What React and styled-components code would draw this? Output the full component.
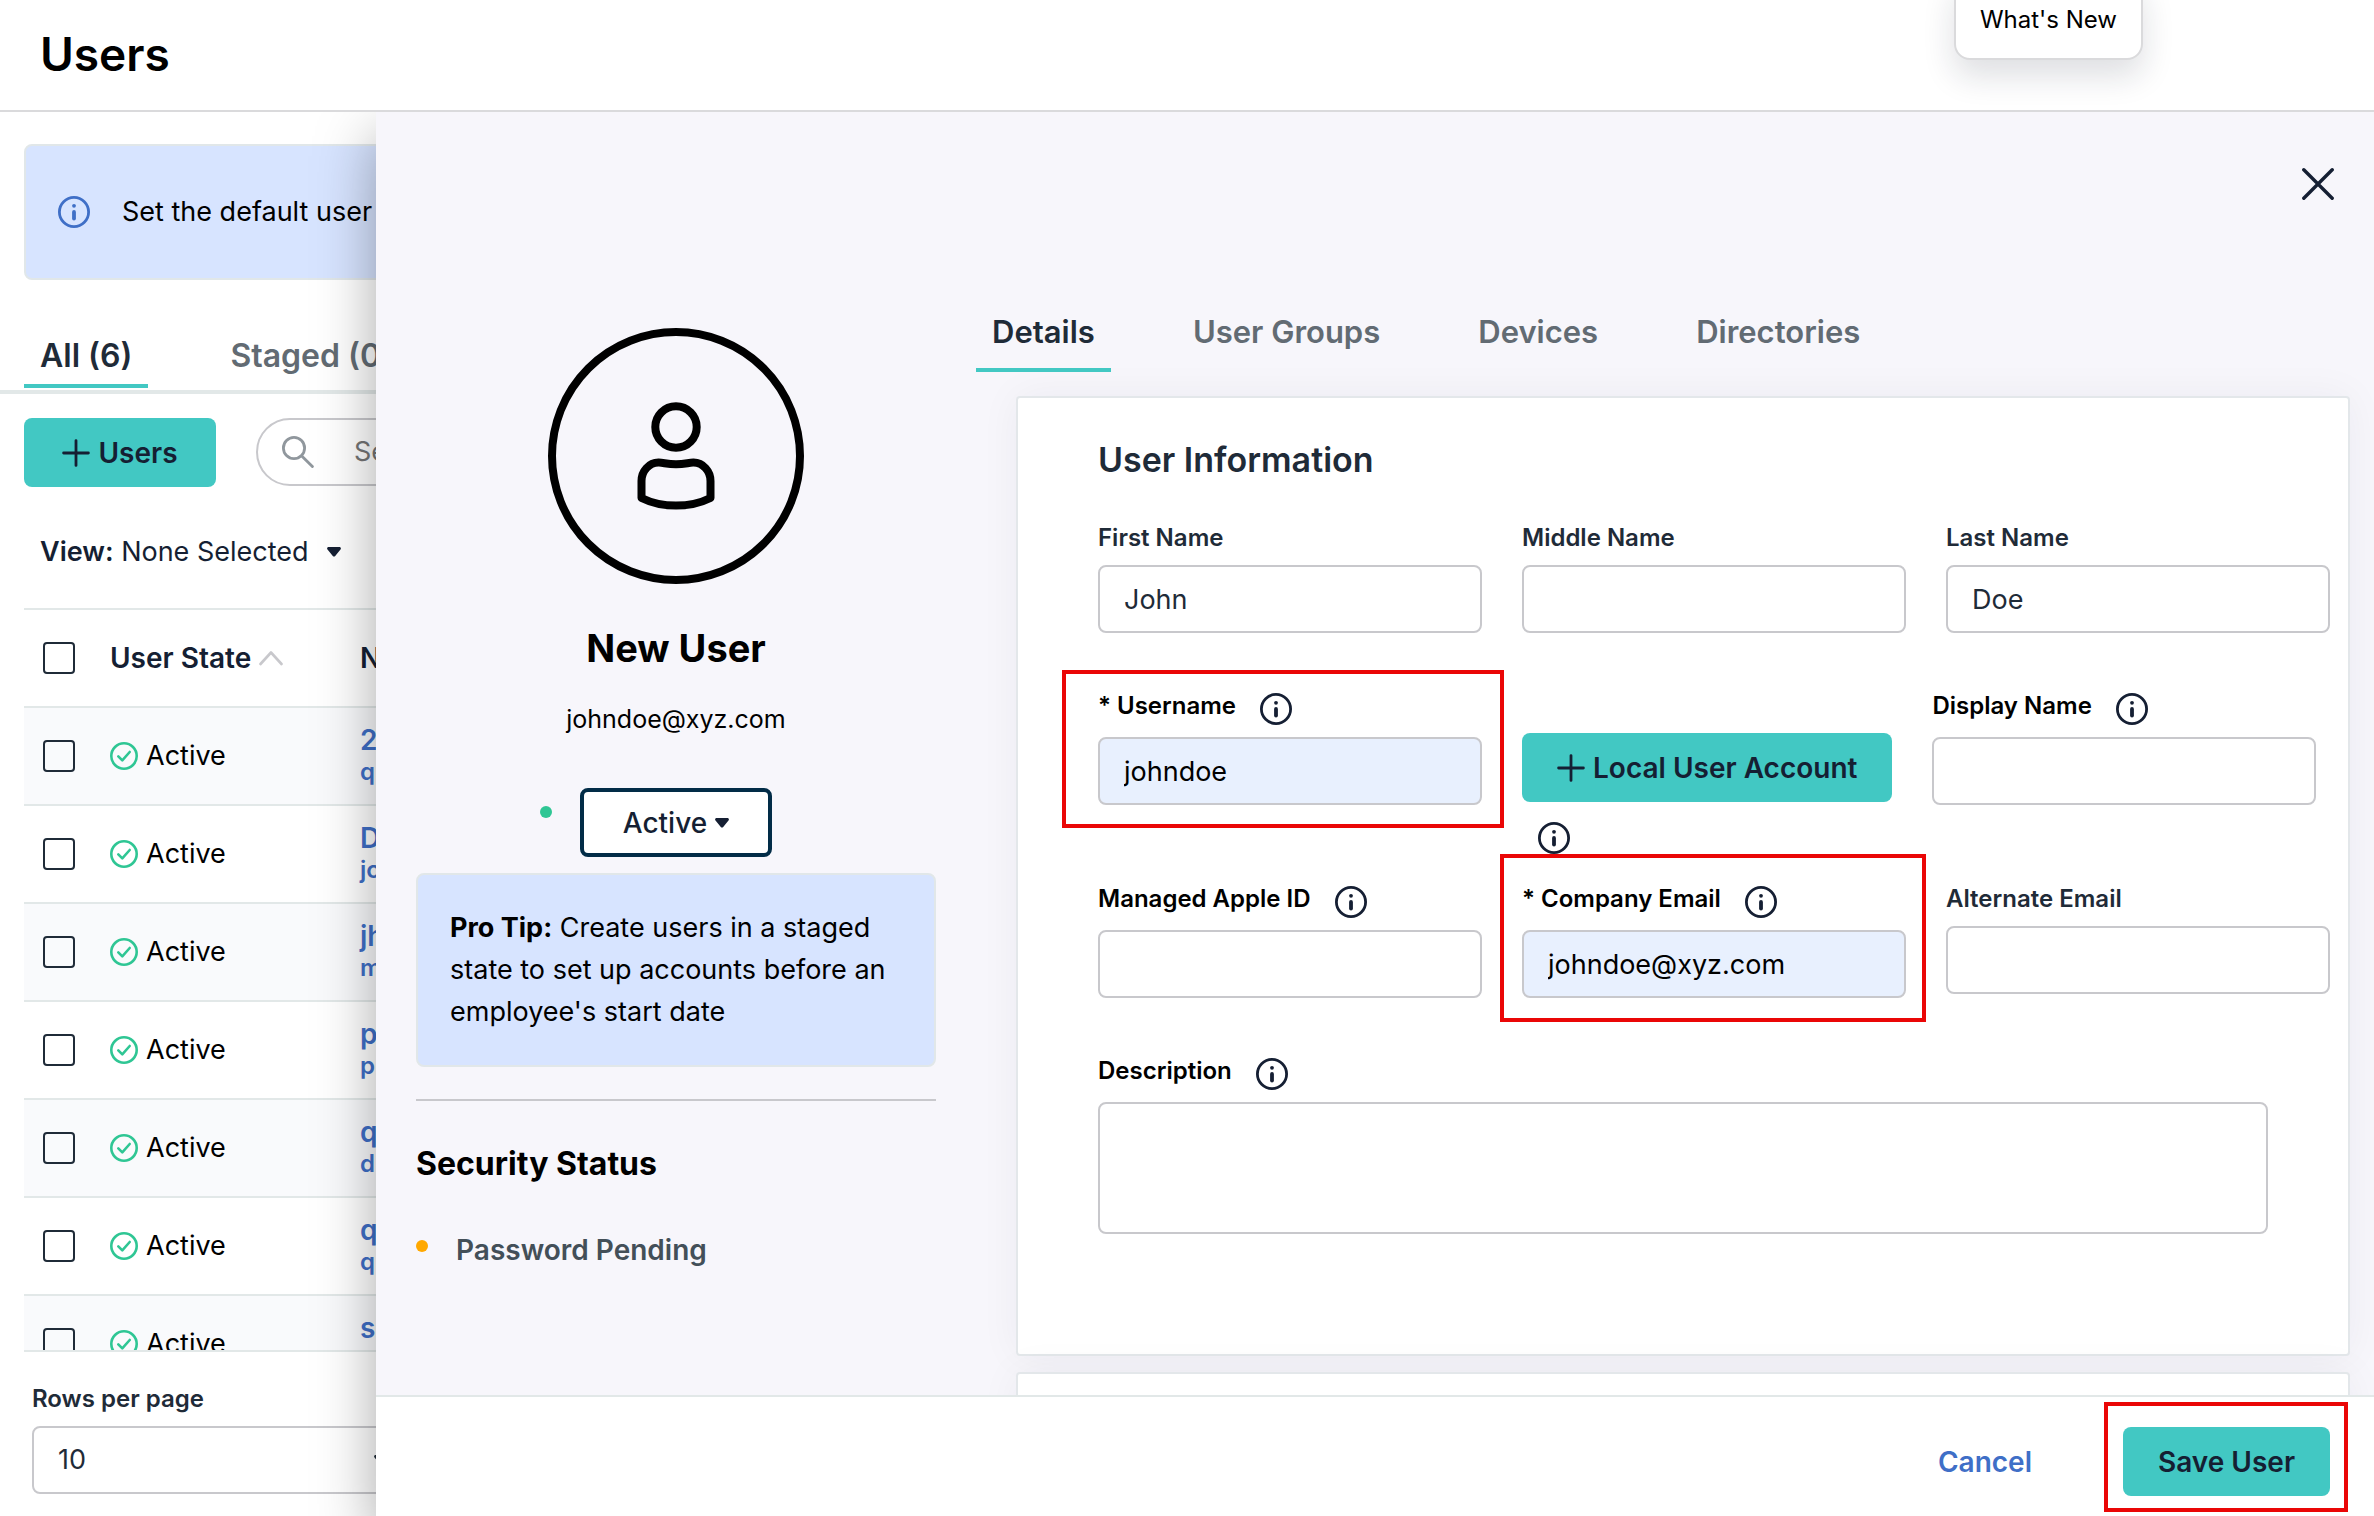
import React, { useState } from 'react';
import styled, { createGlobalStyle, css } from 'styled-components';

const GlobalStyle = createGlobalStyle`
    *, *::before, *::after {
        box-sizing: border-box;
    }
    body {
        margin: 0;
        background: #fff;
        color: #000;
        font-family: Inter, "Liberation Sans", sans-serif;
        font-size: 27px;
        line-height: 42px;
    }
    h1, h2, p {
        margin: 0;
    }
    button, input, select, textarea {
        font: inherit;
        color: inherit;
    }
    svg {
        display: block;
        flex: none;
    }
`;

/* ---------- icons ---------- */

const InfoIcon = () => (
    <svg width="32" height="32" viewBox="0 0 32 32" fill="none" stroke="currentColor">
        <circle cx="16" cy="16" r="14.6" strokeWidth="2.8" />
        <circle cx="16" cy="9.8" r="1.9" fill="currentColor" stroke="none" />
        <path d="M16 16v6.6" strokeWidth="3.8" strokeLinecap="round" />
    </svg>
);

const PlusIcon = () => (
    <svg width="28" height="28" viewBox="0 0 28 28" fill="none" stroke="currentColor" strokeWidth="2.8" strokeLinecap="round">
        <path d="M14 1.6v24.8M1.6 14h24.8" />
    </svg>
);

const SearchIcon = () => (
    <svg width="32" height="32" viewBox="0 0 32 32" fill="none" stroke="#90979d" strokeWidth="2.8" strokeLinecap="round">
        <circle cx="12" cy="12" r="10.6" />
        <path d="M20 20.2l10.4 10.4" />
    </svg>
);

const CaretIcon = () => (
    <svg width="14" height="10" viewBox="0 0 14 10" fill="currentColor">
        <path d="M1.6 0h10.8c1.3 0 2 1.5 1.1 2.5L8.2 8.9c-.6.8-1.8.8-2.4 0L.5 2.5C-.4 1.5.3 0 1.6 0z" />
    </svg>
);

const SortIcon = () => (
    <svg width="24" height="16" viewBox="0 0 24 16" fill="none" stroke="#c8c8cc" strokeWidth="2.6" strokeLinecap="round" strokeLinejoin="round">
        <path d="M1.5 14L12 2.5 22.5 14" />
    </svg>
);

const CheckCircleIcon = () => (
    <svg width="28" height="28" viewBox="0 0 28 28" fill="none" stroke="#2fc694" strokeWidth="2.6" strokeLinecap="round" strokeLinejoin="round">
        <circle cx="14" cy="14" r="12.7" />
        <path d="M8.3 14.3l4 4 7.4-8.3" />
    </svg>
);

const CloseIcon = () => (
    <svg width="32" height="32" viewBox="0 0 32 32" fill="none" stroke="currentColor" strokeWidth="3.4" strokeLinecap="round">
        <path d="M1.8 1.8l28.4 28.4M30.2 1.8L1.8 30.2" />
    </svg>
);

const AvatarIcon = () => (
    <svg width="256" height="256" viewBox="0 0 256 256" fill="none" stroke="#000" strokeWidth="8" strokeLinejoin="round">
        <circle cx="128" cy="128" r="124" />
        <circle cx="128" cy="99" r="20.7" />
        <path d="M93.5 170v-17c0-10 7.5-18.2 17-18.4 5-.1 8 1.6 17.5 1.6s12.5-1.7 17.5-1.6c9.5.2 17 8.4 17 18.4v17c-10 5-21 7.6-34.5 7.6S103.5 175 93.5 170z" />
    </svg>
);

/* ---------- shared ---------- */

const Button = styled.button`
    display: inline-flex;
    align-items: center;
    justify-content: center;
    gap: 8px;
    min-width: 192px;
    height: 69px;
    padding: 0 35px;
    border: 0;
    border-radius: 8px;
    background: #42c8c3;
    color: #151f33;
    font-size: 28px;
    font-weight: 600;
    white-space: nowrap;
    cursor: pointer;
`;

const OutlineButton = styled(Button)`
    padding: 0;
    border: 4px solid #022c47;
    background: #fff;
    font-weight: 500;
`;

const LinkButton = styled(Button)`
    min-width: 0;
    padding: 0;
    background: none;
    color: #3f6fc7;
`;

const IconButton = styled.button`
    padding: 0;
    border: 0;
    background: none;
    color: #151f33;
    cursor: pointer;
`;

const Checkbox = styled.input.attrs({ type: 'checkbox' })`
    display: block;
    appearance: none;
    width: 32px;
    height: 32px;
    margin: 0;
    border: 2px solid #1f2b38;
    border-radius: 4px;
    background: transparent;
`;

const Callout = styled.div`
    border: 2px solid #e1e7e9;
    border-radius: 8px;
    background: #d7e4ff;
`;

const control = css`
    display: block;
    width: 100%;
    height: 68px;
    padding: 0 24px;
    border: 2px solid #c8c8cc;
    border-radius: 8px;
    background: #fff;
    color: #1f2b38;
    outline: 0;
`;

const TabList = styled.div`
    display: flex;
    gap: 66px;
`;

const Tab = styled.button`
    padding: 0 16px 16px;
    border: 0;
    border-bottom: 4px solid ${({ $active }) => ($active ? '#42c8c3' : 'transparent')};
    background: none;
    color: ${({ $active }) => ($active ? '#1f2b38' : '#626b73')};
    font-size: 31px;
    font-weight: 600;
    line-height: 40px;
    white-space: nowrap;
`;

/* ---------- page ---------- */

const Page = styled.div`
    display: flex;
    flex-direction: column;
    height: 100vh;
    overflow: hidden;
`;

const Header = styled.header`
    position: relative;
    display: flex;
    align-items: center;
    flex: none;
    height: 112px;
    padding: 0 40px 2px;
    border-bottom: 2px solid #dadadc;
`;

const PageTitle = styled.h1`
    font-size: 46px;
    font-weight: 600;
    line-height: 56px;
`;

const WhatsNew = styled.button`
    position: absolute;
    top: -24px;
    right: 231px;
    height: 84px;
    padding: 4px 24px 0;
    border: 2px solid #dadadc;
    border-radius: 16px;
    background: #fff;
    box-shadow: 0 16px 32px rgba(20, 30, 50, 0.14);
    font-size: 24px;
    line-height: 32px;
`;

const Body = styled.div`
    position: relative;
    flex: 1;
    min-height: 0;
    overflow: hidden;
`;

const ListPane = styled.main`
    display: flex;
    flex-direction: column;
    height: 100%;
    padding-top: 32px;
`;

const Banner = styled(Callout)`
    display: flex;
    align-items: center;
    gap: 32px;
    height: 136px;
    margin: 0 24px 56px;
    padding: 0 32px;
    color: #3f6fc7;
    p {
        color: #000;
    }
`;

const ListTabs = styled(TabList)`
    padding: 0 24px 2px;
    border-bottom: 4px solid #e2e8e8;
    ${Tab} {
        padding-bottom: 8px;
        font-size: 32px;
    }
`;

const Toolbar = styled.div`
    display: flex;
    gap: 40px;
    padding: 24px 24px 44px;
`;

const Search = styled.label`
    display: flex;
    align-items: center;
    gap: 40px;
    height: 68px;
    padding: 0 24px;
    border: 2px solid #c8c8cc;
    border-radius: 34px;
    input {
        width: 400px;
        padding: 0;
        border: 0;
        outline: 0;
    }
    input::placeholder {
        color: #757575;
    }
`;

const ViewPicker = styled.button`
    display: flex;
    align-items: center;
    align-self: flex-start;
    gap: 18px;
    margin: 0 40px 35px;
    padding: 0;
    border: 0;
    background: none;
    color: #151f33;
    line-height: 42px;
    b {
        font-weight: 600;
    }
`;

const TableWrap = styled.div`
    flex: 1;
    min-height: 0;
    margin: 0 24px;
    overflow: hidden;
    border-top: 2px solid #e2e8e8;
`;

const Table = styled.table`
    width: 100%;
    border-spacing: 0;
    table-layout: fixed;
    text-align: left;
    th, td {
        height: 98px;
        padding: 0;
        border-bottom: 2px solid #e2e8e8;
        vertical-align: middle;
        white-space: nowrap;
    }
    th {
        color: #151f33;
        font-size: 28px;
        font-weight: 600;
    }
    th:first-child, td:first-child {
        width: 86px;
        padding-left: 19px;
    }
    th:nth-child(2) {
        width: 250px;
    }
    tbody tr:nth-child(odd) {
        background: #f9fafc;
    }
`;

const Cell = styled.div`
    display: flex;
    align-items: center;
    gap: 8px;
`;

const NameLink = styled.a`
    display: block;
    color: #3f6fc7;
    font-size: 28px;
    font-weight: 600;
    line-height: 32px;
    text-decoration: none;
    small {
        display: block;
        font-size: 24px;
    }
`;

const PagerBar = styled.footer`
    flex: none;
    margin: 0 24px;
    border-top: 2px solid #e2e8e8;
`;

const Pager = styled.div`
    display: flex;
    flex-direction: column;
    gap: 10px;
    width: 400px;
    padding: 30px 8px 22px;
    label {
        color: #1f2b38;
        font-size: 24px;
        font-weight: 600;
        line-height: 34px;
    }
`;

const SelectBox = styled.div`
    display: grid;
    align-items: center;
    color: #1f2b38;
    select, svg {
        grid-area: 1 / 1;
    }
    select {
        ${control}
        appearance: none;
    }
    svg {
        justify-self: end;
        margin-right: 28px;
        pointer-events: none;
    }
`;

/* ---------- drawer ---------- */

const Drawer = styled.aside`
    position: absolute;
    inset: 0 0 0 376px;
    display: flex;
    flex-direction: column;
    background: #f7f6fb;
    box-shadow: 0 24px 56px rgba(0, 0, 0, 0.34);
`;

const CloseButton = styled(IconButton)`
    position: absolute;
    top: 56px;
    right: 40px;
`;

const DrawerBody = styled.div`
    display: grid;
    grid-template-columns: 600px minmax(0, 1fr);
    flex: 1;
    min-height: 0;
    overflow: hidden;
`;

const Profile = styled.section`
    display: flex;
    flex-direction: column;
    padding: 216px 40px 0;
`;

const Identity = styled.div`
    display: flex;
    flex-direction: column;
    align-items: center;
`;

const ProfileName = styled.h2`
    margin: 40px 0 26px;
    font-size: 38px;
    font-weight: 700;
    line-height: 48px;
`;

const ProfileEmail = styled.p`
    font-size: 25px;
`;

const StateRow = styled.div`
    display: flex;
    gap: 28px;
    margin: 48px 0 16px;
    padding-right: 40px;
`;

const Dot = styled.span`
    flex: none;
    width: 12px;
    height: 12px;
    margin-top: ${({ $top }) => $top}px;
    border-radius: 50%;
    background: ${({ $color }) => $color};
`;

const ProTip = styled(Callout)`
    padding: 32px;
`;

const Divider = styled.hr`
    width: 100%;
    margin: 32px 0 43px;
    border: 0;
    border-top: 2px solid #c8c8cc;
`;

const SectionTitle = styled.h2`
    font-size: 32px;
    font-weight: 700;
    line-height: 40px;
`;

const StatusItem = styled.div`
    display: flex;
    gap: 28px;
    margin-top: 45px;
    color: #434f58;
    font-size: 28px;
    font-weight: 600;
`;

const DetailsColumn = styled.section`
    padding: 200px 24px 0 0;
    min-width: 0;
`;

const Card = styled.div`
    margin: ${({ $first }) => ($first ? 24 : 16)}px 0 0 40px;
    padding: 42px 18px 120px 80px;
    border: 2px solid #e3e7ea;
    border-radius: 4px;
    background: #fff;
    box-shadow: 0 0 40px rgba(30, 30, 60, 0.05);
`;

const FormTitle = styled.h2`
    margin-bottom: 40px;
    color: #1f2b38;
    font-size: 34px;
    font-weight: 600;
    line-height: 40px;
`;

const Row = styled.div`
    display: flex;
    gap: 40px;
    margin-bottom: ${({ $space }) => $space}px;
`;

const FieldBox = styled.div`
    position: relative;
    flex: none;
    align-self: flex-start;
    width: ${({ $wide }) => ($wide ? '95%' : 'calc((100% - 80px) / 3)')};
`;

const LabelRow = styled.div`
    display: flex;
    align-items: flex-start;
    gap: 24px;
    margin-bottom: ${({ $info }) => ($info ? 12 : 10)}px;
    color: ${({ $info }) => ($info ? '#000' : '#1f2b38')};
    font-size: 24px;
    font-weight: 600;
    line-height: 35px;
    ${IconButton} {
        margin-top: 5px;
    }
`;

const Input = styled.input`
    ${control}
    ${({ $filled }) => $filled && css`
        background: #e8f0fe;
        color: #000;
    `}
`;

const TextArea = styled.textarea`
    ${control}
    height: 132px;
    padding: 16px 24px;
    resize: none;
`;

const LocalAccount = styled.div`
    display: flex;
    flex-direction: column;
    align-items: flex-start;
    gap: 20px;
    padding-top: 45px;
    ${IconButton} {
        margin-left: 16px;
    }
`;

const Highlight = styled.span`
    position: absolute;
    inset: ${({ $inset }) => $inset};
    border: 4px solid #ea0606;
    pointer-events: none;
`;

const DrawerFooter = styled.footer`
    display: flex;
    justify-content: flex-end;
    flex: none;
    gap: 91px;
    padding: 30px 44px 20px;
    border-top: 2px solid #e2e8e8;
    background: #fff;
`;

const SaveSlot = styled.div`
    position: relative;
    display: flex;
`;

const users = [
    { name: '2', login: 'q' },
    { name: 'D', login: 'jo' },
    { name: 'jh', login: 'm' },
    { name: 'p', login: 'p' },
    { name: 'q', login: 'd' },
    { name: 'q', login: 'q' },
    { name: 's', login: 's' },
];

const drawerTabs = ['Details', 'User Groups', 'Devices', 'Directories'];

const InfoButton = ({ label }) => (
    <IconButton type="button" aria-label={`About ${label}`}>
        <InfoIcon />
    </IconButton>
);

const Field = ({ id, label, value = '', required, info, filled, highlight }) => (
    <FieldBox>
        <LabelRow $info={info}>
            <label htmlFor={id}>{required ? `* ${label}` : label}</label>
            {info && <InfoButton label={label} />}
        </LabelRow>
        <Input id={id} defaultValue={value} $filled={filled} />
        {highlight && <Highlight $inset={highlight} />}
    </FieldBox>
);

const UserTable = () => (
    <Table>
        <thead>
            <tr>
                <th><Checkbox aria-label="Select all users" /></th>
                <th><Cell>User State <SortIcon /></Cell></th>
                <th>Name</th>
            </tr>
        </thead>
        <tbody>
            {users.map(({ name, login }, index) => (
                <tr key={index}>
                    <td><Checkbox aria-label={`Select ${name}`} /></td>
                    <td><Cell><CheckCircleIcon /> Active</Cell></td>
                    <td>
                        <NameLink href="#user">
                            {name}
                            <small>{login}</small>
                        </NameLink>
                    </td>
                </tr>
            ))}
        </tbody>
    </Table>
);

const UserList = () => (
    <ListPane>
        <Banner>
            <InfoIcon />
            <p>Set the default user</p>
        </Banner>
        <ListTabs>
            <Tab type="button" $active>All (6)</Tab>
            <Tab type="button">Staged (0)</Tab>
        </ListTabs>
        <Toolbar>
            <Button type="button"><PlusIcon />Users</Button>
            <Search>
                <SearchIcon />
                <input type="search" placeholder="Search" aria-label="Search" />
            </Search>
        </Toolbar>
        <ViewPicker type="button">
            <span><b>View:</b> None Selected</span>
            <CaretIcon />
        </ViewPicker>
        <TableWrap>
            <UserTable />
        </TableWrap>
        <PagerBar>
            <Pager>
                <label htmlFor="rows">Rows per page</label>
                <SelectBox>
                    <select id="rows" defaultValue="10">
                        <option>10</option>
                    </select>
                    <CaretIcon />
                </SelectBox>
            </Pager>
        </PagerBar>
    </ListPane>
);

const ProfilePanel = () => (
    <Profile>
        <Identity>
            <AvatarIcon />
            <ProfileName>New User</ProfileName>
            <ProfileEmail>johndoe@xyz.com</ProfileEmail>
            <StateRow>
                <Dot $color="#2fc694" $top={18} />
                <OutlineButton type="button">Active <CaretIcon /></OutlineButton>
            </StateRow>
        </Identity>
        <ProTip>
            <b>Pro Tip:</b> Create users in a staged state to set up accounts before an employee&apos;s start date
        </ProTip>
        <Divider />
        <SectionTitle>Security Status</SectionTitle>
        <StatusItem>
            <Dot $color="#ffa800" $top={11} />
            Password Pending
        </StatusItem>
    </Profile>
);

const UserForm = () => (
    <Card $first>
        <FormTitle>User Information</FormTitle>
        <Row $space={55}>
            <Field id="first" label="First Name" value="John" />
            <Field id="middle" label="Middle Name" />
            <Field id="last" label="Last Name" value="Doe" />
        </Row>
        <Row $space={27}>
            <Field id="username" label="Username" value="johndoe" required info filled highlight="-18px -22px -23px -36px" />
            <LocalAccount>
                <Button type="button"><PlusIcon />Local User Account</Button>
                <InfoButton label="Local User Account" />
            </LocalAccount>
            <Field id="display" label="Display Name" info />
        </Row>
        <Row $space={55}>
            <Field id="apple" label="Managed Apple ID" info />
            <Field id="email" label="Company Email" value="johndoe@xyz.com" required info filled highlight="-27px -20px -24px -22px" />
            <Field id="alternate" label="Alternate Email" />
        </Row>
        <FieldBox $wide>
            <LabelRow $info>
                <label htmlFor="description">Description</label>
                <InfoButton label="Description" />
            </LabelRow>
            <TextArea id="description" />
        </FieldBox>
    </Card>
);

const App = () => {
    const [tab, setTab] = useState('Details');

    return (
        <Page>
            <GlobalStyle />
            <Header>
                <PageTitle>Users</PageTitle>
                <WhatsNew type="button">What&apos;s New</WhatsNew>
            </Header>
            <Body>
                <UserList />
                <Drawer>
                    <DrawerBody>
                        <ProfilePanel />
                        <DetailsColumn>
                            <TabList>
                                {drawerTabs.map(name => (
                                    <Tab key={name} type="button" $active={name === tab} onClick={() => setTab(name)}>
                                        {name}
                                    </Tab>
                                ))}
                            </TabList>
                            <UserForm />
                            <Card />
                        </DetailsColumn>
                    </DrawerBody>
                    <DrawerFooter>
                        <LinkButton type="button">Cancel</LinkButton>
                        <SaveSlot>
                            <Button type="button">Save User</Button>
                            <Highlight $inset="-25px -18px -16px -19px" />
                        </SaveSlot>
                    </DrawerFooter>
                    <CloseButton type="button" aria-label="Close"><CloseIcon /></CloseButton>
                </Drawer>
            </Body>
        </Page>
    );
};

export default App;
